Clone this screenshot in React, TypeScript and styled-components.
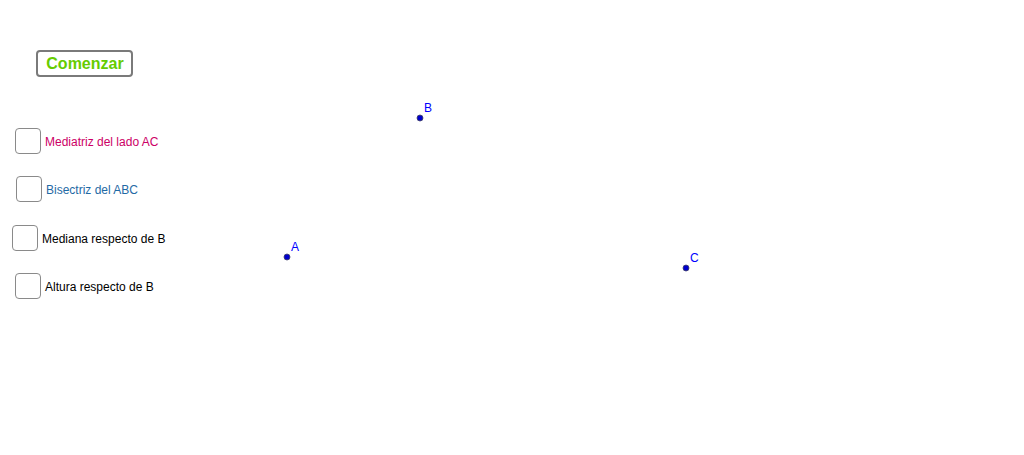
import React from 'react';
import styled, { createGlobalStyle } from 'styled-components'

const GlobalStyle = createGlobalStyle`
  html, body {
    margin: 0;
    padding: 0;
    background: #ffffff;
    font-family: "Liberation Sans", Arial, sans-serif;
  }
`

const Canvas = styled.div`
  position: relative;
  width: 1024px;
  height: 455px;
  overflow: hidden;
  background: #ffffff;
`

const Controls = styled.div`
  display: flex;
  flex-direction: column;
  align-items: flex-start;
  padding-top: 50px;
`

const StartButton = styled.button`
  margin-left: 36px;
  width: 97px;
  height: 27px;
  padding: 0 0 0 1px;
  background: #ffffff;
  border: 2px solid #7a7a7a;
  border-radius: 4px;
  color: #66cc00;
  font-family: "Liberation Sans", Arial, sans-serif;
  font-weight: bold;
  font-size: 16px;
  line-height: 22px;
  cursor: pointer;
`

const CheckList = styled.div`
  display: flex;
  flex-direction: column;
  gap: 22px;
  margin-top: 51px;
`

const CheckRow = styled.label<{ $left: number; $shift?: number }>`
  display: flex;
  align-items: center;
  gap: 4px;
  margin-left: ${p => p.$left}px;
  margin-top: ${p => p.$shift ?? 0}px;
  height: 26px;
  cursor: pointer;
`

const Box = styled.span`
  width: 24px;
  height: 24px;
  border: 1px solid #8a8a8a;
  border-radius: 4px;
  background: #ffffff;
`

const Caption = styled.span<{ $color: string }>`
  color: ${p => p.$color};
  font-size: 12px;
  line-height: 14px;
  padding-top: 2px;
`

const Drawing = styled.svg`
  position: absolute;
  left: 0;
  top: 0;
  pointer-events: none;
`

const points = [
  { name: 'A', x: 287, y: 257 },
  { name: 'B', x: 420, y: 118 },
  { name: 'C', x: 686, y: 268 },
]

const options = [
  { text: 'Mediatriz del lado AC', color: '#cc0066', left: 15, shift: 0 },
  { text: 'Bisectriz del ABC', color: '#1f6aa5', left: 16, shift: 0 },
  { text: 'Mediana respecto de B', color: '#000000', left: 12, shift: 1 },
  { text: 'Altura respecto de B', color: '#000000', left: 15, shift: 0 },
]

const App = () => {
  return (
    <Canvas>
      <GlobalStyle />
      <Controls>
        <StartButton>Comenzar</StartButton>
        <CheckList>
          {options.map(option => (
            <CheckRow key={option.text} $left={option.left} $shift={option.shift}>
              <Box />
              <Caption $color={option.color}>{option.text}</Caption>
            </CheckRow>
          ))}
        </CheckList>
      </Controls>
      <Drawing width="1024" height="455" viewBox="0 0 1024 455">
        {points.map(point => (
          <g key={point.name}>
            <circle cx={point.x} cy={point.y} r="3" fill="#0000cc" stroke="#444466" strokeWidth="0.8" />
            <text
              x={point.x + 4}
              y={point.y - 6}
              fill="#0000ff"
              fontSize="12"
              fontFamily='"Liberation Sans", Arial, sans-serif'
            >{point.name}</text>
          </g>
        ))}
      </Drawing>
    </Canvas>
  );
};

export default App;
